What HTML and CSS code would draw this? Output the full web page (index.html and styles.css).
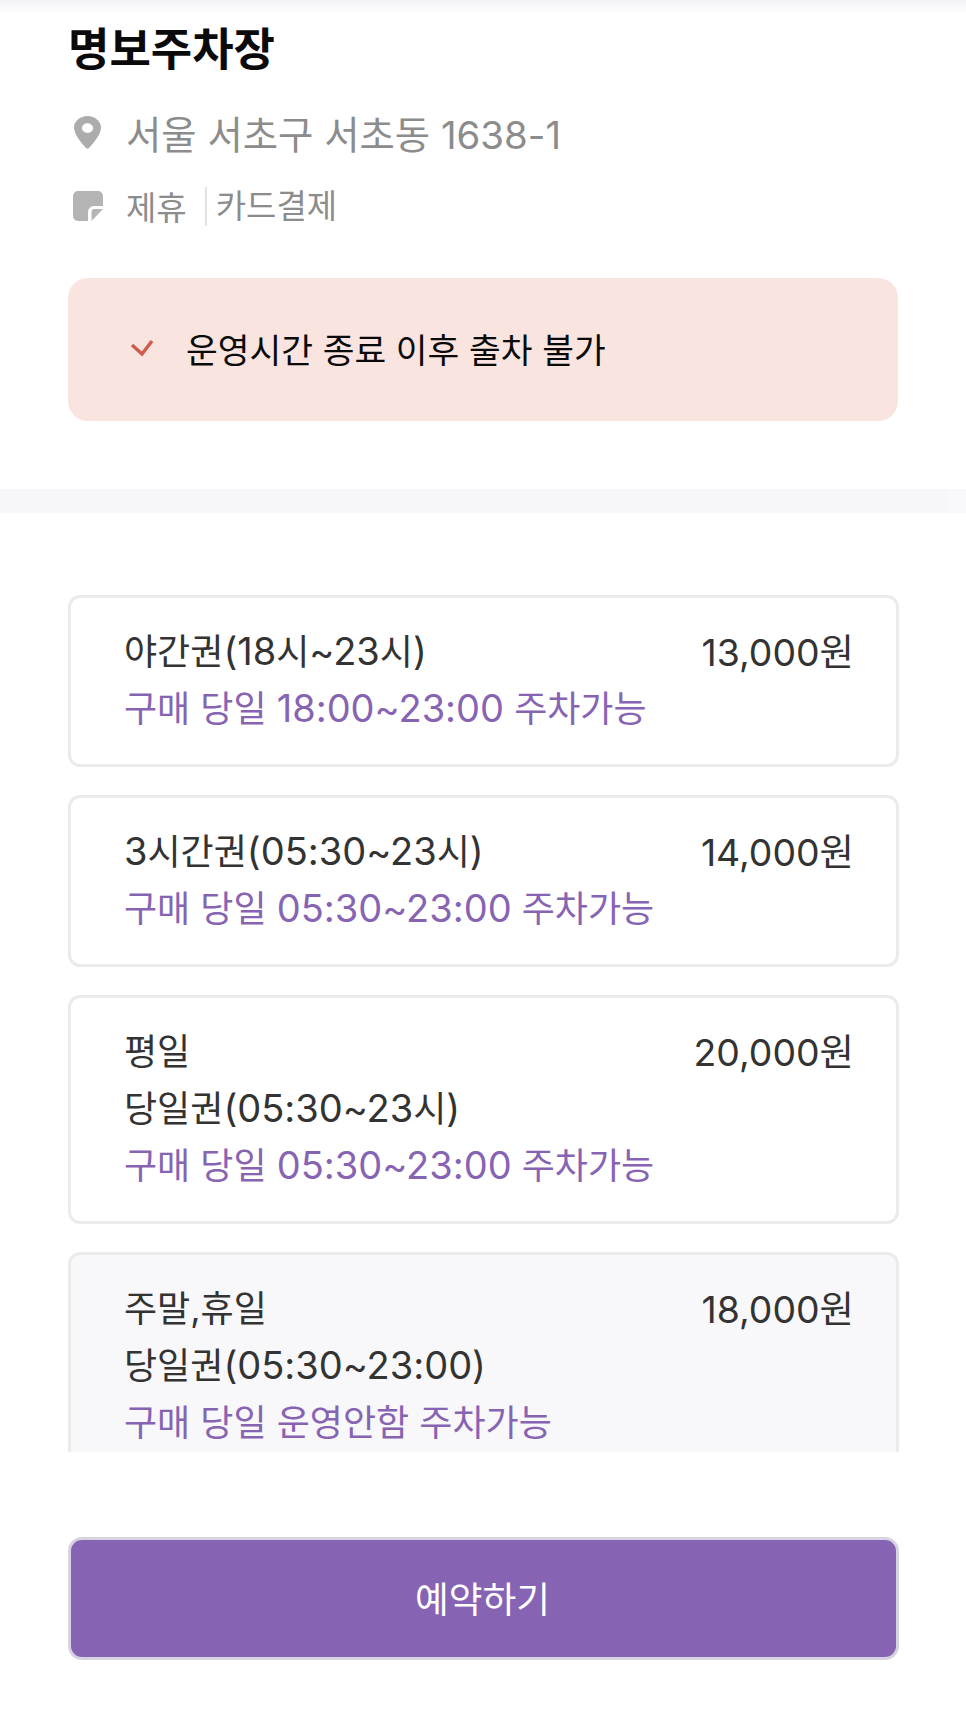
FILE: index.html
```html
<!DOCTYPE html>
<html lang="ko">
<head>
<meta charset="utf-8">
<title>명보주차장</title>
<link rel="stylesheet" href="styles.css">
</head>
<body>
<div class="app">
  <div class="top-shadow"></div>
  <section class="info">
    <h1 class="title">명보주차장</h1>
    <div class="address">
      <svg class="icon-pin" viewBox="0 0 24 34" preserveAspectRatio="none" aria-hidden="true"><path fill-rule="evenodd" fill="#acacac" d="M12 0C5.400 0 0 5.400 0 12c0 7.500 8.200 17.800 11 21.200.5.600 1.500.600 2 0C15.800 29.800 24 19.500 24 12 24 5.400 18.600 0 12 0zm0 7.500a5 5 0 1 1 0 10 5 5 0 0 1 0-10z"/></svg>
      <span>서울 서초구 서초동 1638-1</span>
    </div>
    <div class="tags">
      <svg class="icon-note" viewBox="0 0 30 30" aria-hidden="true"><path fill="#b4b4b4" d="M5 0h20a5 5 0 0 1 5 5v10h-9a6 6 0 0 0-6 6v9H5a5 5 0 0 1-5-5V5a5 5 0 0 1 5-5z"/><path fill="#b4b4b4" d="M18.500 30v-9a3 3 0 0 1 3-3H30z"/></svg>
      <span class="tag">제휴</span>
      <span class="tag tag-sep">카드결제</span>
    </div>
    <div class="notice">
      <svg class="icon-check" viewBox="0 0 24 18" aria-hidden="true"><path d="M2 6l10 9L22 2" fill="none" stroke="#cf5b4b" stroke-width="3.400"/></svg>
      <span>운영시간 종료 이후 출차 불가</span>
    </div>
  </section>
  <div class="divider"></div>
  <section class="tickets">
    <div class="ticket">
      <div class="ticket-main">
        <div class="ticket-name">야간권<span class="num">(18</span>시<span class="num">~23</span>시<span class="num">)</span></div>
        <div class="ticket-desc">구매 당일 <span class="num">18:00~23:00</span> 주차가능</div>
      </div>
      <div class="ticket-price">13,000원</div>
    </div>
    <div class="ticket">
      <div class="ticket-main">
        <div class="ticket-name"><span class="num">3</span>시간권<span class="num">(05:30~23</span>시<span class="num">)</span></div>
        <div class="ticket-desc">구매 당일 <span class="num">05:30~23:00</span> 주차가능</div>
      </div>
      <div class="ticket-price">14,000원</div>
    </div>
    <div class="ticket">
      <div class="ticket-main">
        <div class="ticket-name">평일<br>당일권<span class="num">(05:30~23</span>시<span class="num">)</span></div>
        <div class="ticket-desc">구매 당일 <span class="num">05:30~23:00</span> 주차가능</div>
      </div>
      <div class="ticket-price">20,000원</div>
    </div>
    <div class="ticket ticket-off">
      <div class="ticket-main">
        <div class="ticket-name">주말,휴일<br>당일권<span class="num">(05:30~23:00)</span></div>
        <div class="ticket-desc">구매 당일 운영안함 주차가능</div>
      </div>
      <div class="ticket-price">18,000원</div>
    </div>
  </section>
  <div class="footer">
    <button class="reserve" type="button">예약하기</button>
  </div>
</div>
</body>
</html>
```
FILE: styles.css
```css
* { box-sizing: border-box; }
html, body { margin: 0; padding: 0; background: #fff; }
body { font-family: Inter, "Noto Sans CJK KR", sans-serif; }
.app { width: 966px; height: 1721px; overflow: hidden; display: flex; flex-direction: column; }
.top-shadow { height: 15px; background: linear-gradient(#f3f3f7, #fff); flex: none; }
.info { padding: 0 68px; height: 474px; flex: none; }
.title { margin: 10px 0 0; font-size: 45px; line-height: 50px; font-weight: 700; color: #0a0a0a; }
.address { display: flex; align-items: center; margin-top: 33px; height: 48px; font-size: 38.400px; color: #8c8c8c; }
.icon-pin { width: 27px; height: 33px; margin: 0 25px 0 6px; flex: none; }
.tags { display: flex; align-items: center; margin-top: 30px; height: 40px; font-size: 33px; color: #8c8c8c; }
.icon-note { width: 30px; height: 30px; margin: 0 23px 0 5px; flex: none; }
.tag-sep { margin-left: 18px; padding-left: 9px; border-left: 2px solid #e4e4e4; line-height: 39px; }
.notice { display: flex; align-items: center; margin-top: 52px; height: 143px; padding: 0 0 4px 62px; border-radius: 20px; background: #f9e4e0; font-size: 34.500px; color: #0a0a0a; }
.icon-check { width: 24px; height: 18px; margin-right: 32px; flex: none; }
.divider { height: 24px; flex: none; background: linear-gradient(90deg, #f7f7f9 949px, #f9f9fb 949px); }
.tickets { height: 939px; flex: none; padding: 82px 67px 0 68px; display: flex; flex-direction: column; gap: 28px; overflow: hidden; }
.ticket { display: flex; justify-content: space-between; flex: none; padding: 26px 42px 26px 53px; border: 3px solid #ebebeb; border-radius: 12px; background: #fff; font-size: 36px; line-height: 57px; }
.ticket-off { background: #f8f8fa; }
.ticket-name { color: #333; }
.ticket-desc { color: #8764b3; }
.ticket-price { color: #333; font-size: 37.400px; }
.num { font-size: 38px; line-height: 1; }
.footer { padding: 85px 67px 0 68px; }
.reserve { display: block; width: 100%; height: 123px; padding: 0 2px 4px 0; border: 3px solid #d8d3e0; border-radius: 14px; background: #8764b3; color: #fff; font: inherit; font-size: 36.700px; }
```
